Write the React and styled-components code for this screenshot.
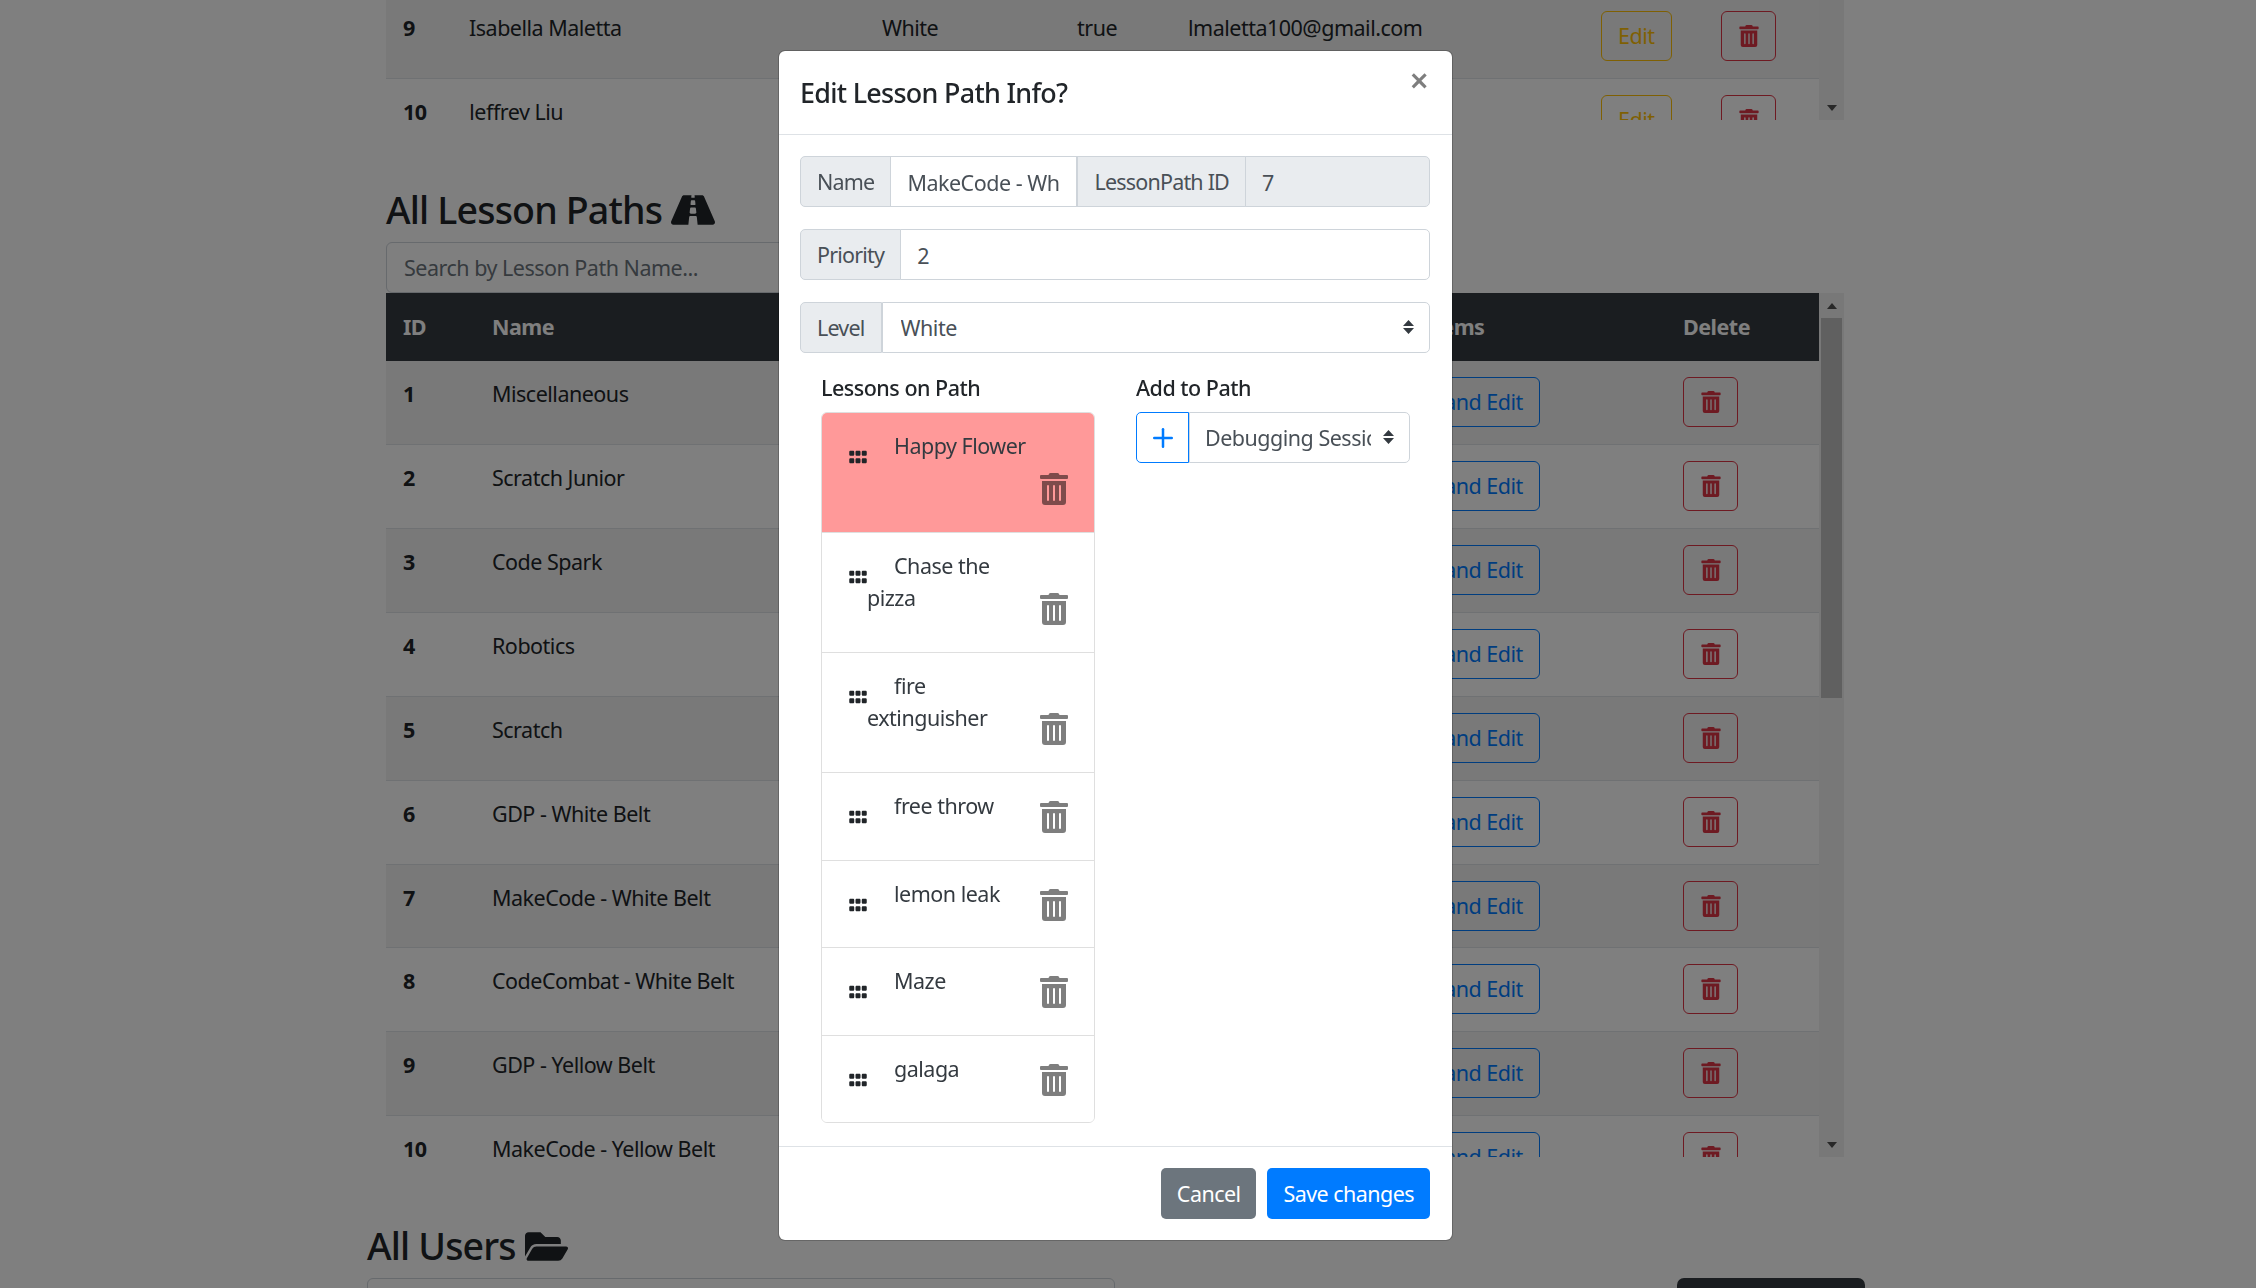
import React from 'react'
import styled, { createGlobalStyle } from 'styled-components'
import { FaFolderOpen, FaGripHorizontal, FaRoad, FaTrashAlt } from 'react-icons/fa'
import { Plus } from 'lucide-react'

const users = [
  { id: 9, name: 'Isabella Maletta', level: 'White', active: 'true', email: 'lmaletta100@gmail.com' },
  { id: 10, name: 'Jeffrey Liu', level: 'White', active: 'true', email: 'jliu@gmail.com' },
]

const paths = [
  'Miscellaneous',
  'Scratch Junior',
  'Code Spark',
  'Robotics',
  'Scratch',
  'GDP - White Belt',
  'MakeCode - White Belt',
  'CodeCombat - White Belt',
  'GDP - Yellow Belt',
  'MakeCode - Yellow Belt',
]

const lessons = [
  { name: 'Happy Flower', tall: true, active: true },
  { name: 'Chase the pizza', tall: true },
  { name: 'fire extinguisher', tall: true },
  { name: 'free throw' },
  { name: 'lemon leak' },
  { name: 'Maze' },
  { name: 'galaga' },
]

export default function App() {
  return (
    <>
      <GlobalStyle />
      <Page>
        <TopTableRow>
          <TopClip>
            <Table $shift={-5}>
              <colgroup>
                {[66, 413, 195, 111, 413, 120, 115].map((w, i) => <Col key={i} $w={w} />)}
              </colgroup>
              <tbody>
                {users.map((u, i) => (
                  <Row key={u.id} $striped={i % 2 === 0}>
                    <IdCell>{u.id}</IdCell>
                    <Cell>{u.name}</Cell>
                    <Cell>{u.level}</Cell>
                    <Cell>{u.active}</Cell>
                    <Cell>{u.email}</Cell>
                    <ButtonCell><OutlineButton $color="#ffc107">Edit</OutlineButton></ButtonCell>
                    <ButtonCell><OutlineButton $color="#dc3545" $icon><FaTrashAlt size={22} /></OutlineButton></ButtonCell>
                  </Row>
                ))}
              </tbody>
            </Table>
          </TopClip>
          <Scrollbar><ScrollSpacer /><ArrowBox><ArrowDown /></ArrowBox></Scrollbar>
        </TopTableRow>

        <LessonSection>
          <PathsHeading>All Lesson Paths <FaRoad size={44} /></PathsHeading>
          <SearchInput placeholder="Search by Lesson Path Name..." readOnly />
          <TableRow>
            <TableClip>
              <Table>
                <colgroup>
                  {[89, 885, 306, 153].map((w, i) => <Col key={i} $w={w} />)}
                </colgroup>
                <thead>
                  <tr>
                    <HeadCell>ID</HeadCell>
                    <HeadCell>Name</HeadCell>
                    <HeadCell $nudge>Path Items</HeadCell>
                    <HeadCell>Delete</HeadCell>
                  </tr>
                </thead>
                <tbody>
                  {paths.map((name, i) => (
                    <Row key={name} $striped={i % 2 === 0}>
                      <IdCell>{i + 1}</IdCell>
                      <Cell>{name}</Cell>
                      <ButtonCell><OutlineButton $color="#007bff">View and Edit</OutlineButton></ButtonCell>
                      <ButtonCell><OutlineButton $color="#dc3545" $icon><FaTrashAlt size={22} /></OutlineButton></ButtonCell>
                    </Row>
                  ))}
                </tbody>
              </Table>
            </TableClip>
            <Scrollbar>
              <ArrowBox><ArrowUp /></ArrowBox>
              <ScrollThumb />
              <ScrollSpacer />
              <ArrowBox><ArrowDown /></ArrowBox>
            </Scrollbar>
          </TableRow>
        </LessonSection>

        <UsersSection>
          <UsersHeading>All Users <FaFolderOpen size={43} /></UsersHeading>
          <UsersToolbar>
            <UsersSearch placeholder="Search by User Name..." readOnly />
            <DarkButton />
          </UsersToolbar>
        </UsersSection>
      </Page>

      <Backdrop>
        <Modal>
          <ModalHeader>
            <ModalTitle>Edit Lesson Path Info?</ModalTitle>
            <CloseGlyph>×</CloseGlyph>
          </ModalHeader>
          <ModalBody>
            <InputGroup>
              <Addon>Name</Addon>
              <TextInput $w={187} value="MakeCode - White Belt" readOnly />
              <Addon $flat>LessonPath ID</Addon>
              <TextInput $disabled value="7" readOnly />
            </InputGroup>
            <InputGroup>
              <Addon>Priority</Addon>
              <TextInput value="2" readOnly />
            </InputGroup>
            <InputGroup>
              <Addon>Level</Addon>
              <SelectWrap>
                <Select $pad={18} defaultValue="White"><option>White</option></Select>
                <SelectArrows />
              </SelectWrap>
            </InputGroup>
            <Columns>
              <Column>
                <Label>Lessons on Path</Label>
                <LessonList>
                  {lessons.map((l) => (
                    <LessonItem key={l.name} $tall={l.tall} $active={l.active}>
                      <Grip><FaGripHorizontal size={20} /></Grip>
                      <LessonName>{l.name}</LessonName>
                      <LessonTrash $top={l.tall ? 60 : 28}><FaTrashAlt size={32} /></LessonTrash>
                    </LessonItem>
                  ))}
                </LessonList>
              </Column>
              <Column>
                <Label>Add to Path</Label>
                <InputGroup>
                  <AddButton><Plus size={30} strokeWidth={2} /></AddButton>
                  <SelectWrap>
                    <Select $pad={15} defaultValue="Debugging Session"><option>Debugging Session</option></Select>
                    <SelectArrows />
                  </SelectWrap>
                </InputGroup>
              </Column>
            </Columns>
          </ModalBody>
          <ModalFooter>
            <FooterButton $bg="#6c757d">Cancel</FooterButton>
            <FooterButton $bg="#007bff">Save changes</FooterButton>
          </ModalFooter>
        </Modal>
      </Backdrop>
    </>
  )
}

function SelectArrows() {
  return (
    <ArrowsSvg viewBox="0 0 11 14" width="11" height="14">
      <path d="M5.5 0 L11 6 H0 Z M5.5 14 L0 8 H11 Z" fill="#343a40" />
    </ArrowsSvg>
  )
}

const GlobalStyle = createGlobalStyle`
  html, body {
    margin: 0;
    overflow: hidden;
    background: #fff;
    font-family: "Noto Sans", "Open Sans", sans-serif;
    font-size: 21.5px;
    line-height: 32px;
    color: #212529;
  }
  * { box-sizing: border-box; }
`

const Page = styled.div`
  height: 1288px;
  overflow: hidden;
  display: flex;
  flex-direction: column;
`

const TopTableRow = styled.div`
  display: flex;
  height: 120px;
  margin-left: 386px;
  flex: none;
`

const TopClip = styled.div`
  width: 1433px;
  overflow: hidden;
`

const Table = styled.table`
  width: 1433px;
  table-layout: fixed;
  border-collapse: collapse;
  margin-top: ${(p) => p.$shift || 0}px;
`

const Col = styled.col`
  width: ${(p) => p.$w}px;
`

const Row = styled.tr`
  height: 83.85px;
  background: ${(p) => (p.$striped ? 'rgba(0,0,0,.05)' : 'transparent')};
  border-bottom: 1px solid #dee2e6;
`

const Cell = styled.td`
  padding: 17px 17px 16px;
  vertical-align: top;
  white-space: nowrap;
  letter-spacing: -0.5px;
`

const ButtonCell = styled(Cell)`
  padding-top: 16px;
`

const IdCell = styled(Cell)`
  font-weight: 700;
`

const HeadCell = styled.th`
  height: 68px;
  padding: 16px 17px 16px ${(p) => (p.$nudge ? '12px' : '17px')};
  text-align: left;
  white-space: nowrap;
  background: #343a40;
  color: #fff;
  font-weight: 700;
  letter-spacing: -0.5px;
`

const OutlineButton = styled.button`
  height: 50px;
  padding: 0 ${(p) => (p.$icon ? '15.5px' : '16px')};
  display: inline-flex;
  align-items: center;
  justify-content: center;
  border: 1.5px solid ${(p) => p.$color};
  border-radius: 6px;
  background: transparent;
  color: ${(p) => p.$color};
  font: inherit;
  letter-spacing: -0.5px;
`

const Scrollbar = styled.div`
  width: 25px;
  display: flex;
  flex-direction: column;
  background: #f1f1f1;
`

const ScrollSpacer = styled.div`
  flex: 1;
`

const ScrollThumb = styled.div`
  height: 380px;
  margin-right: 2px;
  margin-left: 2px;
  background: #c1c1c1;
`

const ArrowBox = styled.div`
  height: 25px;
  display: flex;
  align-items: center;
  justify-content: center;
  flex: none;
`

const ArrowUp = styled.div`
  border-left: 5.5px solid transparent;
  border-right: 5.5px solid transparent;
  border-bottom: 6px solid #505050;
`

const ArrowDown = styled.div`
  border-left: 5.5px solid transparent;
  border-right: 5.5px solid transparent;
  border-top: 6px solid #505050;
`

const LessonSection = styled.section`
  margin-left: 386px;
  width: 1458px;
  flex: none;
`

const PathsHeading = styled.h2`
  margin: 67px 0 9px;
  height: 46px;
  display: flex;
  align-items: center;
  gap: 9px;
  font-size: 37.6px;
  line-height: 46px;
  font-weight: 500;
  letter-spacing: -0.85px;
`

const SearchInput = styled.input`
  display: block;
  width: 748px;
  height: 51px;
  padding: 0 17px;
  border: 1px solid #ced4da;
  border-radius: 6px;
  font: inherit;
  letter-spacing: -0.5px;
  &::placeholder { color: #6c757d; }
`

const TableRow = styled.div`
  display: flex;
  height: 864px;
`

const TableClip = styled.div`
  width: 1433px;
  overflow: hidden;
`

const UsersSection = styled.section`
  margin-left: 367px;
  width: 1498px;
  flex: none;
`

const UsersHeading = styled(PathsHeading)`
  margin: 66px 0 9px;
`

const UsersToolbar = styled.div`
  display: flex;
  justify-content: space-between;
`

const UsersSearch = styled(SearchInput)``

const DarkButton = styled.div`
  width: 188px;
  height: 51px;
  background: #343a40;
  border-radius: 7px;
`

const Backdrop = styled.div`
  position: fixed;
  inset: 0;
  background: rgba(0, 0, 0, 0.5);
  padding: 50px 0 0 778px;
`

const Modal = styled.div`
  width: 675px;
  height: 1191px;
  background: #fff;
  border: 1px solid rgba(0, 0, 0, 0.2);
  border-radius: 7px;
  background-clip: padding-box;
  display: flex;
  flex-direction: column;
`

const ModalHeader = styled.div`
  height: 84px;
  padding: 0 23px 0 21px;
  display: flex;
  justify-content: space-between;
  border-bottom: 1px solid #dee2e6;
  flex: none;
`

const ModalTitle = styled.h5`
  margin: 22px 0 0;
  font-size: 26.9px;
  line-height: 40px;
  font-weight: 500;
  letter-spacing: -0.7px;
`

const CloseGlyph = styled.span`
  margin-top: 9px;
  font-size: 34px;
  line-height: 40px;
  font-weight: 600;
  color: #000;
  opacity: 0.5;
`

const ModalBody = styled.div`
  padding: 21px 22px 23px 21px;
  flex: 1;
  display: flex;
  flex-direction: column;
  gap: 22px;
`

const InputGroup = styled.div`
  display: flex;
  height: 51px;
  flex: none;
`

const Addon = styled.div`
  display: flex;
  align-items: center;
  padding: 0 16px;
  background: #e9ecef;
  border: 1px solid #ced4da;
  border-radius: ${(p) => (p.$flat ? '0' : '5px 0 0 5px')};
  color: #495057;
  white-space: nowrap;
  flex: none;
  letter-spacing: -0.8px;
`

const TextInput = styled.input`
  flex: ${(p) => (p.$w ? 'none' : '1')};
  width: ${(p) => (p.$w ? `${p.$w}px` : 'auto')};
  min-width: 0;
  height: 51px;
  padding: 2px 16px 0;
  margin-left: -1px;
  border: 1px solid #ced4da;
  border-radius: 0;
  background: ${(p) => (p.$disabled ? '#e9ecef' : '#fff')};
  color: #495057;
  font: inherit;
  letter-spacing: -0.5px;
  &:last-child { border-radius: 0 5px 5px 0; }
`

const SelectWrap = styled.div`
  position: relative;
  flex: 1;
  min-width: 0;
`

const Select = styled.select`
  appearance: none;
  width: 100%;
  height: 51px;
  padding: 0 38px 0 ${(p) => p.$pad}px;
  border: 1px solid #ced4da;
  border-radius: 0 5px 5px 0;
  background: #fff;
  color: #495057;
  font: inherit;
  letter-spacing: -0.5px;
  opacity: 1;
`

const ArrowsSvg = styled.svg`
  position: absolute;
  right: 16px;
  top: 18px;
`

const Columns = styled.div`
  display: flex;
  gap: 41px;
  margin: -3px 20px 0 21px;
`

const Column = styled.div`
  width: 274px;
`

const Label = styled.div`
  margin-bottom: 8px;
  font-weight: 500;
  letter-spacing: -0.5px;
`

const LessonList = styled.ul`
  margin: 0;
  padding: 0;
  list-style: none;
  border: 1px solid #dfdfdf;
  border-radius: 6px;
  overflow: hidden;
`

const LessonItem = styled.li`
  display: flex;
  height: ${(p) => (p.$tall ? '120px' : '87.5px')};
  padding-left: 26px;
  background: ${(p) => (p.$active ? '#ff9999' : '#fff')};
  border-bottom: 1px solid #dfdfdf;
  &:last-child { border-bottom: 0; height: 86.5px; }
`

const Grip = styled.span`
  flex: none;
  width: 19px;
  height: 20px;
  margin-top: 30px;
  color: #212529;
`

const LessonName = styled.div`
  flex: 1;
  margin-top: 17px;
  text-indent: 27px;
  color: #343a40;
  letter-spacing: -0.5px;
`

const LessonTrash = styled.span`
  flex: none;
  width: 28px;
  height: 32px;
  margin: ${(p) => p.$top}px 28px 0 8px;
  color: #000;
  opacity: 0.5;
`

const AddButton = styled.button`
  flex: none;
  width: 53px;
  height: 51px;
  display: flex;
  align-items: center;
  justify-content: center;
  padding: 0;
  background: #fff;
  color: #007bff;
  border: 1.5px solid #007bff;
  border-radius: 5px 0 0 5px;
`

const ModalFooter = styled.div`
  padding: 21px 22px 22px 21px;
  display: flex;
  justify-content: flex-end;
  gap: 11px;
  border-top: 1px solid #dee2e6;
  flex: none;
`

const FooterButton = styled.button`
  height: 51px;
  padding: 0 16px;
  border: 0;
  border-radius: 5px;
  background: ${(p) => p.$bg};
  color: #fff;
  font: inherit;
  letter-spacing: -0.55px;
`
